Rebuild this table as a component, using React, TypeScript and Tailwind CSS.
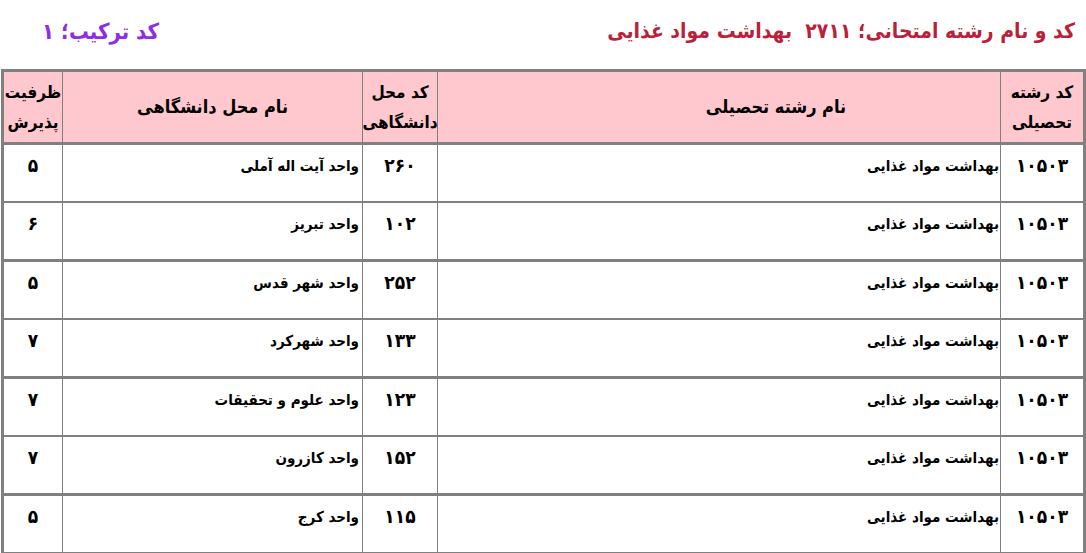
import React from 'react';

interface Row {
  code: string;
  major: string;
  uniCode: string;
  uniName: string;
  capacity: string;
}

const rows: Row[] = [
  { code: '۱۰۵۰۳', major: 'بهداشت مواد غذایی', uniCode: '۲۶۰', uniName: 'واحد آیت اله آملی', capacity: '۵' },
  { code: '۱۰۵۰۳', major: 'بهداشت مواد غذایی', uniCode: '۱۰۲', uniName: 'واحد تبریز', capacity: '۶' },
  { code: '۱۰۵۰۳', major: 'بهداشت مواد غذایی', uniCode: '۲۵۲', uniName: 'واحد شهر قدس', capacity: '۵' },
  { code: '۱۰۵۰۳', major: 'بهداشت مواد غذایی', uniCode: '۱۳۳', uniName: 'واحد شهرکرد', capacity: '۷' },
  { code: '۱۰۵۰۳', major: 'بهداشت مواد غذایی', uniCode: '۱۲۳', uniName: 'واحد علوم و تحقیقات', capacity: '۷' },
  { code: '۱۰۵۰۳', major: 'بهداشت مواد غذایی', uniCode: '۱۵۲', uniName: 'واحد کازرون', capacity: '۷' },
  { code: '۱۰۵۰۳', major: 'بهداشت مواد غذایی', uniCode: '۱۱۵', uniName: 'واحد کرج', capacity: '۵' },
];

const App = () => {
  return (
    <div dir="rtl" className="w-[1086px] h-[553px] overflow-hidden bg-white font-['DejaVu_Sans_Condensed','DejaVu_Sans',sans-serif] font-bold text-black">
      <div className="flex items-center justify-between h-[69px] pr-[11px] pl-[42px] pb-[6px]">
        <h1 className="text-[21px] text-[#bb1f3a]">
          کد و نام رشته امتحانی؛ ۲۷۱۱&nbsp;&nbsp;بهداشت مواد غذایی
        </h1>
        <h2 className="text-[22px] text-[#8e2de2]">کد ترکیب؛ ۱</h2>
      </div>

      <div className="w-[1085px] border-[3px] border-[#808080]">
        {/* header */}
        <div className="flex h-[73px] bg-[#ffc7ce] border-b-[3px] border-[#808080] text-[17px] leading-[30px]">
          <div className="w-[83px] border-l border-[#808080] flex flex-col items-center justify-center">
            <span>کد رشته</span>
            <span>تحصیلی</span>
          </div>
          <div className="w-[563px] border-l border-[#808080] flex items-center justify-center pl-[114px] text-[18px]">
            نام رشته تحصیلی
          </div>
          <div className="w-[75px] border-l border-[#808080] flex flex-col items-center justify-center">
            <span>کد محل</span>
            <span>دانشگاهی</span>
          </div>
          <div className="w-[300px] border-l border-[#808080] flex items-center justify-center text-[18px]">
            نام محل دانشگاهی
          </div>
          <div className="w-[58px] flex flex-col items-center justify-center">
            <span>ظرفیت</span>
            <span>پذیرش</span>
          </div>
        </div>

        {/* body */}
        {rows.map((r, i) => (
          <div
            key={i}
            className={
              i % 2 === 0
                ? 'flex h-[58px] border-b-2 border-[#808080] text-[15px] leading-[22px]'
                : 'flex h-[59px] border-b-[3px] border-[#808080] text-[15px] leading-[22px]'
            }
          >
            <div className="w-[83px] border-l border-[#808080] pt-[9px] text-center text-[19px] tracking-[4px]">
              {r.code}
            </div>
            <div className="w-[563px] border-l border-[#808080] pt-[10px] pr-[1px] text-right">{r.major}</div>
            <div className="w-[75px] border-l border-[#808080] pt-[9px] text-center text-[19px] tracking-[4px]">
              {r.uniCode}
            </div>
            <div className="w-[300px] border-l border-[#808080] pt-[10px] pr-[3px] text-right">{r.uniName}</div>
            <div className="w-[58px] pt-[9px] text-center text-[19px]">{r.capacity}</div>
          </div>
        ))}
      </div>
    </div>
  );
};

export default App;
